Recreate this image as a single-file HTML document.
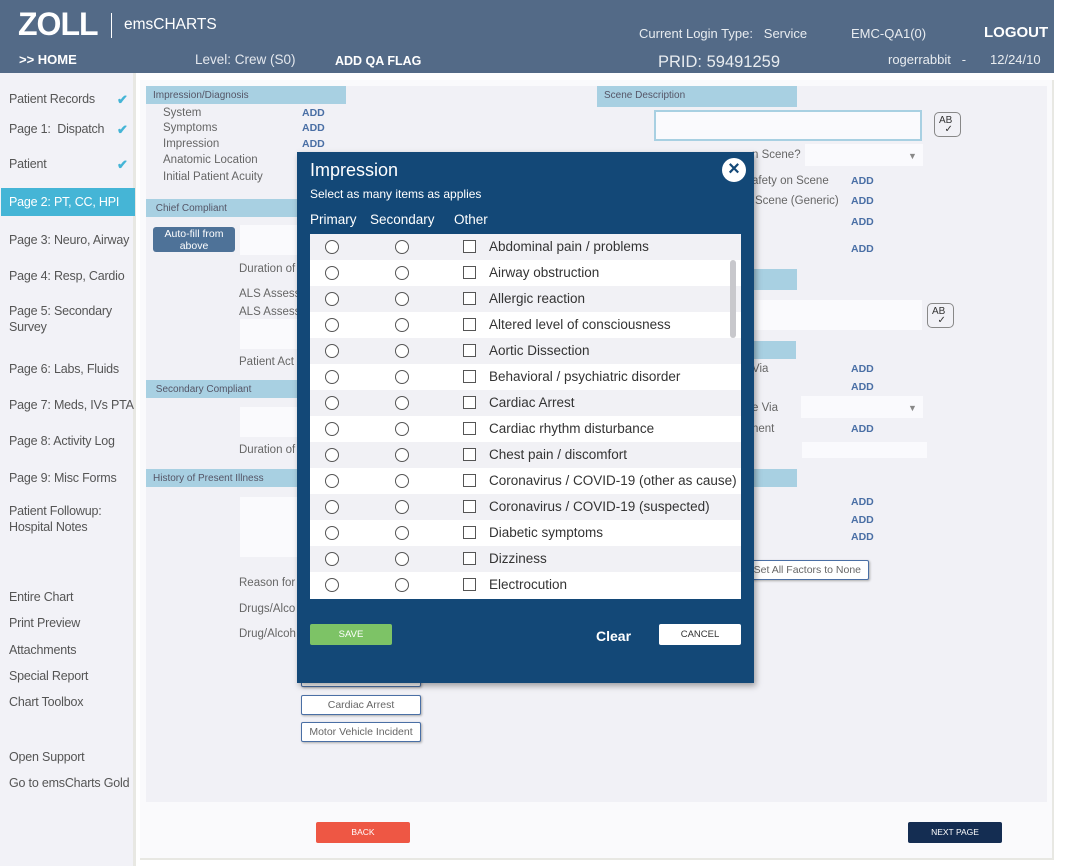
<!DOCTYPE html>
<html><head><meta charset="utf-8"><style>
*{box-sizing:border-box;margin:0;padding:0}
body{width:1084px;height:866px;position:relative;background:#fff;font-family:"Liberation Sans",sans-serif;overflow:hidden;color:#555}
.a{position:absolute;white-space:nowrap}
.hdr{left:0;top:0;width:1054px;height:73px;background:#536a87;color:#fff}
.side{left:0;top:73px;width:136px;height:793px;background:#f2f2f7;border-right:3px solid #e8e8e3}
.si{font-size:12.5px;color:#555;left:9px;letter-spacing:-0.2px}
.ck{color:#45b5d6;font-size:13px;left:117px;font-weight:bold}
.sh{background:#a8d0e2;font-size:10px;color:#556;padding:4px 0 0 7px;height:18px}
.lbl{font-size:11.5px;color:#666}
.add{font-size:10.5px;color:#4a6fa5;font-weight:bold}
.inp{background:#fafafd}
.btn2{border:1px solid #4a6fa5;background:#fff;border-radius:2px;font-size:10.5px;color:#666;text-align:center;height:20px;line-height:18px;box-shadow:1px 1px 2px #aaa}
.row{position:absolute;left:0;width:431px;height:26px;font-size:13.5px;color:#333}
.rd{position:absolute;top:6px;width:14px;height:14px;border:1px solid #555;border-radius:50%;background:#fff}
.cb{position:absolute;left:153px;top:6px;width:13px;height:13px;border:1px solid #555;background:#fff}
.rt{position:absolute;left:179px;top:5px}
</style></head><body>
<div class="a hdr">
 <div class="a" style="left:18px;top:6px;font-size:32px;font-weight:900;letter-spacing:-1px">ZOLL</div>
 <div class="a" style="left:111px;top:13px;width:1px;height:25px;background:#fff"></div>
 <div class="a" style="left:124px;top:16px;font-size:15.5px">emsCHARTS</div>
 <div class="a" style="left:19px;top:52px;font-size:13px;font-weight:bold">&gt;&gt; HOME</div>
 <div class="a" style="left:195px;top:52px;font-size:13.5px;color:#e4e8ee">Level: Crew (S0)</div>
 <div class="a" style="left:335px;top:54px;font-size:12.5px;font-weight:bold">ADD QA FLAG</div>
 <div class="a" style="left:639px;top:26px;font-size:13px;color:#e8ecf0">Current Login Type:&nbsp;&nbsp;&nbsp;Service</div>
 <div class="a" style="left:851px;top:26px;font-size:13px;color:#e8ecf0">EMC-QA1(0)</div>
 <div class="a" style="left:984px;top:24px;font-size:15px;font-weight:bold">LOGOUT</div>
 <div class="a" style="left:658px;top:53px;font-size:16.5px;color:#e8ecf0">PRID: 59491259</div>
 <div class="a" style="left:888px;top:52px;font-size:13px;color:#e8ecf0">rogerrabbit&nbsp;&nbsp;&nbsp;-</div>
 <div class="a" style="left:990px;top:52px;font-size:13px;color:#e8ecf0">12/24/10</div>
</div>
<div class="a" style="left:1054px;top:0;width:30px;height:866px;background:#fff"></div>
<div class="a side"></div>
<div class="a si" style="top:92px">Patient Records</div><div class="a ck" style="top:92px">✔</div>
<div class="a si" style="top:122px">Page 1:&nbsp; Dispatch</div><div class="a ck" style="top:122px">✔</div>
<div class="a si" style="top:157px">Patient</div><div class="a ck" style="top:157px">✔</div>
<div class="a" style="left:1px;top:188px;width:134px;height:28px;background:#45b5d6"></div>
<div class="a si" style="top:195px;color:#fff">Page 2: PT, CC, HPI</div>
<div class="a si" style="top:233px">Page 3: Neuro, Airway</div>
<div class="a si" style="top:269px">Page 4: Resp, Cardio</div>
<div class="a si" style="top:304px">Page 5: Secondary</div>
<div class="a si" style="top:320px">Survey</div>
<div class="a si" style="top:362px">Page 6: Labs, Fluids</div>
<div class="a si" style="top:398px">Page 7: Meds, IVs PTA</div>
<div class="a si" style="top:434px">Page 8: Activity Log</div>
<div class="a si" style="top:471px">Page 9: Misc Forms</div>
<div class="a si" style="top:504px">Patient Followup:</div>
<div class="a si" style="top:520px">Hospital Notes</div>
<div class="a si" style="top:590px">Entire Chart</div>
<div class="a si" style="top:616px">Print Preview</div>
<div class="a si" style="top:643px">Attachments</div>
<div class="a si" style="top:669px">Special Report</div>
<div class="a si" style="top:695px">Chart Toolbox</div>
<div class="a si" style="top:750px">Open Support</div>
<div class="a si" style="top:776px">Go to emsCharts Gold</div>

<div class="a" style="left:140px;top:80px;width:914px;height:780px;background:#fafafc;border-right:2px solid #e8e8e3;border-bottom:2px solid #e8e8e3"></div>
<div class="a" style="left:146px;top:86px;width:901px;height:716px;background:#f1f1f6"></div>

<div class="a sh" style="left:146px;top:86px;width:200px">Impression/Diagnosis</div>
<div class="a lbl" style="left:163px;top:107px">System</div><div class="a add" style="left:302px;top:107px">ADD</div>
<div class="a lbl" style="left:163px;top:122px">Symptoms</div><div class="a add" style="left:302px;top:122px">ADD</div>
<div class="a lbl" style="left:163px;top:138px">Impression</div><div class="a add" style="left:302px;top:138px">ADD</div>
<div class="a lbl" style="left:163px;top:154px">Anatomic Location</div>
<div class="a lbl" style="left:163px;top:171px">Initial Patient Acuity</div>
<div class="a sh" style="left:146px;top:199px;width:200px">&nbsp;Chief Compliant</div>
<div class="a" style="left:153px;top:227px;width:82px;height:25px;background:#4e7298;border-radius:3px;color:#fff;font-size:10.5px;text-align:center;line-height:12px;padding-top:1px">Auto-fill from<br>above</div>
<div class="a inp" style="left:240px;top:225px;width:60px;height:30px"></div>
<div class="a lbl" style="left:239px;top:263px">Duration of</div>
<div class="a lbl" style="left:239px;top:288px">ALS Assess</div>
<div class="a lbl" style="left:239px;top:306px">ALS Assess</div>
<div class="a inp" style="left:240px;top:319px;width:60px;height:30px"></div>
<div class="a lbl" style="left:239px;top:356px">Patient Act</div>
<div class="a sh" style="left:146px;top:380px;width:200px">&nbsp;Secondary Compliant</div>
<div class="a inp" style="left:240px;top:407px;width:60px;height:30px"></div>
<div class="a lbl" style="left:239px;top:444px">Duration of</div>
<div class="a sh" style="left:146px;top:469px;width:651px">History of Present Illness</div>
<div class="a inp" style="left:240px;top:497px;width:60px;height:60px"></div>
<div class="a lbl" style="left:239px;top:577px">Reason for</div>
<div class="a lbl" style="left:239px;top:603px">Drugs/Alco</div>
<div class="a lbl" style="left:239px;top:628px">Drug/Alcoh</div>
<div class="a btn2" style="left:301px;top:667px;width:120px"></div>
<div class="a btn2" style="left:301px;top:695px;width:120px">Cardiac Arrest</div>
<div class="a btn2" style="left:301px;top:722px;width:120px">Motor Vehicle Incident</div>

<div class="a sh" style="left:597px;top:86px;width:200px;height:21px">Scene Description</div>
<div class="a inp" style="left:654px;top:110px;width:268px;height:31px;border:2px solid #a8d0e2"></div>
<div class="a" style="left:934px;top:112px;width:27px;height:25px;border:1px solid #888;border-radius:5px;font-size:10px;color:#333;padding:3px 0 0 4px;line-height:9px">AB<br>&nbsp;&nbsp;✓</div>
<div class="a lbl" style="left:752px;top:149px">n Scene?</div>
<div class="a inp" style="left:805px;top:144px;width:118px;height:22px"></div><div class="a" style="left:908px;top:151px;font-size:9px;color:#888">▼</div>
<div class="a lbl" style="left:752px;top:175px">afety on Scene</div><div class="a add" style="left:851px;top:175px">ADD</div>
<div class="a lbl" style="left:755px;top:195px">Scene (Generic)</div><div class="a add" style="left:851px;top:195px">ADD</div>
<div class="a add" style="left:851px;top:216px">ADD</div>
<div class="a add" style="left:851px;top:243px">ADD</div>
<div class="a sh" style="left:597px;top:269px;width:200px;height:21px"></div>
<div class="a inp" style="left:740px;top:300px;width:182px;height:30px"></div>
<div class="a" style="left:927px;top:303px;width:27px;height:25px;border:1px solid #888;border-radius:5px;font-size:10px;color:#333;padding:3px 0 0 4px;line-height:9px">AB<br>&nbsp;&nbsp;✓</div>
<div class="a sh" style="left:597px;top:341px;width:199px"></div>
<div class="a lbl" style="left:752px;top:363px">Via</div><div class="a add" style="left:851px;top:363px">ADD</div>
<div class="a add" style="left:851px;top:381px">ADD</div>
<div class="a lbl" style="left:752px;top:402px">e Via</div>
<div class="a inp" style="left:801px;top:396px;width:122px;height:22px"></div><div class="a" style="left:908px;top:403px;font-size:9px;color:#888">▼</div>
<div class="a lbl" style="left:752px;top:423px">nent</div><div class="a add" style="left:851px;top:423px">ADD</div>
<div class="a inp" style="left:802px;top:442px;width:125px;height:16px"></div>
<div class="a add" style="left:851px;top:496px">ADD</div>
<div class="a add" style="left:851px;top:514px">ADD</div>
<div class="a add" style="left:851px;top:531px">ADD</div>
<div class="a btn2" style="left:740px;top:560px;width:129px;text-align:right;padding-right:7px">Set All Factors to None</div>

<div class="a" style="left:316px;top:822px;width:94px;height:21px;background:#ee5744;border-radius:2px;color:#fff;font-size:8.5px;text-align:center;line-height:21px">BACK</div>
<div class="a" style="left:908px;top:822px;width:94px;height:21px;background:#142d52;border-radius:2px;color:#fff;font-size:8.5px;text-align:center;line-height:21px">NEXT PAGE</div>

<div class="a" style="left:297px;top:152px;width:457px;height:531px;background:#134877;box-shadow:2px 3px 6px rgba(0,0,0,.35);color:#fff">
 <div class="a" style="left:13px;top:8px;font-size:18px">Impression</div>
 <div class="a" style="left:13px;top:35px;font-size:12px">Select as many items as applies</div>
 <div class="a" style="left:13px;top:60px;font-size:13.5px">Primary</div>
 <div class="a" style="left:73px;top:60px;font-size:13.5px">Secondary</div>
 <div class="a" style="left:157px;top:60px;font-size:13.5px">Other</div>
 <div class="a" style="left:425px;top:6px;width:24px;height:24px;border-radius:50%;background:#fff;color:#134877;font-size:20px;font-weight:bold;text-align:center;line-height:23px">×</div>
 <div class="a" style="left:13px;top:82px;width:431px;height:365px;background:#fff;overflow:hidden">
  <div class="row" style="top:0;background:#f1f1f5"><div class="rd" style="left:15px"></div><div class="rd" style="left:85px"></div><div class="cb"></div><div class="rt">Abdominal pain / problems</div></div>
  <div class="row" style="top:26px"><div class="rd" style="left:15px"></div><div class="rd" style="left:85px"></div><div class="cb"></div><div class="rt">Airway obstruction</div></div>
  <div class="row" style="top:52px;background:#f1f1f5"><div class="rd" style="left:15px"></div><div class="rd" style="left:85px"></div><div class="cb"></div><div class="rt">Allergic reaction</div></div>
  <div class="row" style="top:78px"><div class="rd" style="left:15px"></div><div class="rd" style="left:85px"></div><div class="cb"></div><div class="rt">Altered level of consciousness</div></div>
  <div class="row" style="top:104px;background:#f1f1f5"><div class="rd" style="left:15px"></div><div class="rd" style="left:85px"></div><div class="cb"></div><div class="rt">Aortic Dissection</div></div>
  <div class="row" style="top:130px"><div class="rd" style="left:15px"></div><div class="rd" style="left:85px"></div><div class="cb"></div><div class="rt">Behavioral / psychiatric disorder</div></div>
  <div class="row" style="top:156px;background:#f1f1f5"><div class="rd" style="left:15px"></div><div class="rd" style="left:85px"></div><div class="cb"></div><div class="rt">Cardiac Arrest</div></div>
  <div class="row" style="top:182px"><div class="rd" style="left:15px"></div><div class="rd" style="left:85px"></div><div class="cb"></div><div class="rt">Cardiac rhythm disturbance</div></div>
  <div class="row" style="top:208px;background:#f1f1f5"><div class="rd" style="left:15px"></div><div class="rd" style="left:85px"></div><div class="cb"></div><div class="rt">Chest pain / discomfort</div></div>
  <div class="row" style="top:234px"><div class="rd" style="left:15px"></div><div class="rd" style="left:85px"></div><div class="cb"></div><div class="rt">Coronavirus / COVID-19 (other as cause)</div></div>
  <div class="row" style="top:260px;background:#f1f1f5"><div class="rd" style="left:15px"></div><div class="rd" style="left:85px"></div><div class="cb"></div><div class="rt">Coronavirus / COVID-19 (suspected)</div></div>
  <div class="row" style="top:286px"><div class="rd" style="left:15px"></div><div class="rd" style="left:85px"></div><div class="cb"></div><div class="rt">Diabetic symptoms</div></div>
  <div class="row" style="top:312px;background:#f1f1f5"><div class="rd" style="left:15px"></div><div class="rd" style="left:85px"></div><div class="cb"></div><div class="rt">Dizziness</div></div>
  <div class="row" style="top:338px"><div class="rd" style="left:15px"></div><div class="rd" style="left:85px"></div><div class="cb"></div><div class="rt">Electrocution</div></div>
  <div class="a" style="left:420px;top:26px;width:6px;height:78px;border-radius:3px;background:#c8c8cc"></div>
 </div>
 <div class="a" style="left:13px;top:472px;width:82px;height:21px;background:#7dc366;border-radius:2px;font-size:9.5px;text-align:center;line-height:21px">SAVE</div>
 <div class="a" style="left:299px;top:476px;font-size:14px;font-weight:bold">Clear</div>
 <div class="a" style="left:362px;top:472px;width:82px;height:21px;background:#fff;border-radius:2px;font-size:9.5px;color:#333;text-align:center;line-height:21px">CANCEL</div>
</div>
</body></html>
